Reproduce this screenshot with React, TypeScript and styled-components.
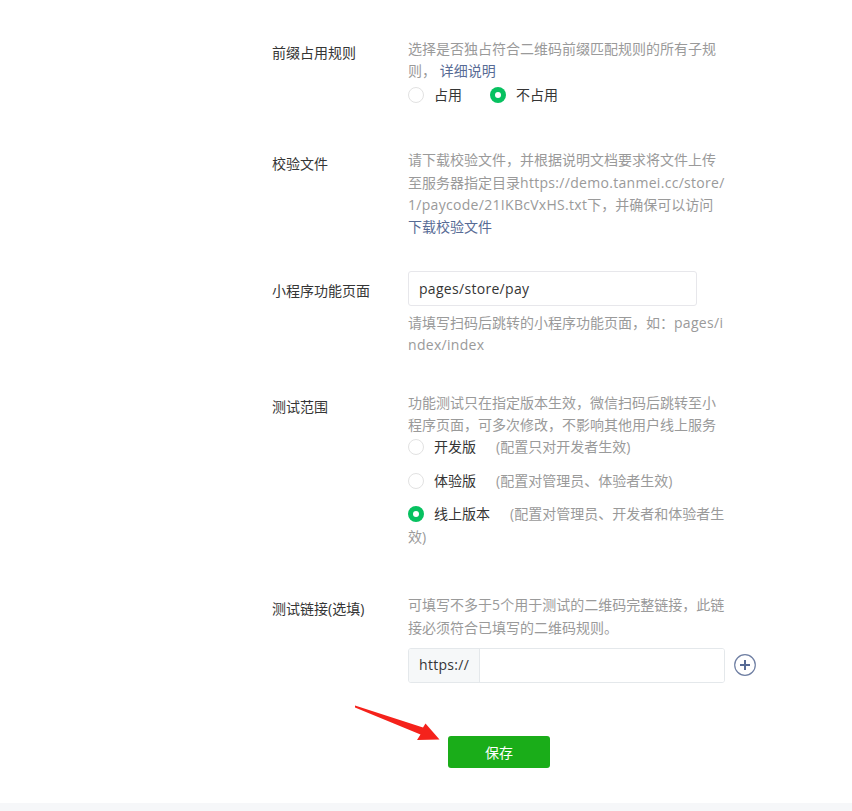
import React from "react";
import styled, { createGlobalStyle } from "styled-components";

const GlobalStyle = createGlobalStyle`
  html, body {
    margin: 0;
    padding: 0;
    background: #fff;
  }
  body {
    font-family: "Open Sans", "Noto Sans CJK SC", sans-serif;
    font-size: 14px;
    color: #353535;
  }
  * {
    box-sizing: border-box;
  }
`;

const Page = styled.div`
  position: relative;
  width: 852px;
  min-height: 811px;
  display: flex;
  flex-direction: column;
  background: #fff;
`;

const Main = styled.main`
  flex: 1;
  padding: 38px 0 0 272px;
`;

const FooterBand = styled.div`
  height: 8px;
  background: #f6f7f9;
`;

const Form = styled.div`
  width: 454px;
`;

const Row = styled.div<{ $top?: number }>`
  display: grid;
  grid-template-columns: 136px 320px;
  margin-top: ${(p) => p.$top ?? 0}px;
  line-height: 22.4px;
`;

const Label = styled.div<{ $offset: number }>`
  padding-top: ${(p) => p.$offset}px;
  color: #353535;
  white-space: nowrap;
`;

const Field = styled.div`
  min-width: 0;
`;

const Desc = styled.div<{ $top?: number }>`
  margin-top: ${(p) => p.$top ?? 0}px;
  color: #9a9a9a;
  word-break: break-all;
`;

const TextLink = styled.a<{ $block?: boolean }>`
  display: ${(p) => (p.$block ? "block" : "inline")};
  color: #576b95;
  text-decoration: none;
  cursor: pointer;
`;

const Latin = styled.span`
  letter-spacing: 0.3px;
`;

const InlineRadios = styled.div`
  margin-top: 1px;
`;

const InlineOption = styled.label`
  display: inline-block;
  margin-right: 28px;
  color: #353535;
`;

const RadioList = styled.div``;

const ListOption = styled.label`
  display: block;
  color: #353535;
  word-break: break-all;
  & + & {
    margin-top: 11px;
  }
`;

const RadioMark = styled.span<{ $checked?: boolean }>`
  position: relative;
  display: inline-block;
  width: 16px;
  height: 16px;
  margin-right: 10px;
  border-radius: 50%;
  vertical-align: -3px;
  border: ${(p) => (p.$checked ? "none" : "1px solid #e2e2e2")};
  background: ${(p) => (p.$checked ? "#07c160" : "#fff")};
  &::after {
    content: "";
    display: ${(p) => (p.$checked ? "block" : "none")};
    position: absolute;
    top: 5px;
    left: 5px;
    width: 6px;
    height: 6px;
    border-radius: 50%;
    background: #fff;
  }
`;

const OptionHint = styled.span`
  margin-left: 20px;
  color: #9a9a9a;
`;

const TextInput = styled.input`
  display: block;
  width: 289px;
  height: 35px;
  padding: 0 10px;
  border: 1px solid #e7e7eb;
  border-radius: 3px;
  font: inherit;
  font-size: 14px;
  letter-spacing: 0.3px;
  color: #353535;
  background: #fff;
  outline: none;
`;

const LinkRow = styled.div`
  display: flex;
  align-items: center;
  gap: 9px;
  margin-top: 9px;
`;

const InputGroup = styled.div`
  display: flex;
  flex: none;
  width: 317px;
  height: 35px;
  border: 1px solid #e4e8eb;
  border-radius: 3px;
  overflow: hidden;
  background: #fff;
`;

const Prefix = styled.div`
  display: flex;
  align-items: center;
  width: 71px;
  padding-left: 10px;
  border-right: 1px solid #e4e8eb;
  background: #f6f8f9;
  color: #353535;
  letter-spacing: 0.3px;
`;

const GroupInput = styled.input`
  flex: 1;
  min-width: 0;
  border: none;
  padding: 0 10px;
  font: inherit;
  font-size: 14px;
  color: #353535;
  outline: none;
  background: #fff;
`;

const AddButton = styled.button`
  display: flex;
  align-items: center;
  justify-content: center;
  width: 22px;
  height: 22px;
  padding: 0;
  border: none;
  background: none;
  cursor: pointer;
`;

const Actions = styled.div`
  display: flex;
  justify-content: center;
  margin-top: 53px;
`;

const SaveButton = styled.button`
  width: 102px;
  height: 32px;
  border: none;
  border-radius: 3px;
  background: #1aad19;
  color: #fff;
  font: inherit;
  font-size: 14px;
  cursor: pointer;
`;

const ArrowMark = styled.svg`
  position: absolute;
  left: 350px;
  top: 700px;
  pointer-events: none;
`;

const PlusIcon = () => (
  <svg width="22" height="22" viewBox="0 0 22 22">
    <circle cx="11" cy="11" r="10.3" fill="none" stroke="#6f7fa3" strokeWidth="1.2" />
    <path d="M11 6v10M6 11h10" stroke="#576b95" strokeWidth="2" strokeLinecap="butt" />
  </svg>
);

export default function App() {
  return (
    <>
      <GlobalStyle />
      <Page>
        <Main>
          <Form>
            <Row>
              <Label $offset={4}>前缀占用规则</Label>
              <Field>
                <Desc>
                  选择是否独占符合二维码前缀匹配规则的所有子规则， <TextLink>详细说明</TextLink>
                </Desc>
                <InlineRadios>
                  <InlineOption>
                    <RadioMark />
                    占用
                  </InlineOption>
                  <InlineOption>
                    <RadioMark $checked />
                    不占用
                  </InlineOption>
                </InlineRadios>
              </Field>
            </Row>

            <Row $top={43}>
              <Label $offset={4}>校验文件</Label>
              <Field>
                <Desc>
                  请下载校验文件，并根据说明文档要求将文件上传至服务器指定目录
                  <Latin>https://demo.tanmei.cc/store/1/paycode/21IKBcVxHS.txt</Latin>
                  下，并确保可以访问
                  <TextLink $block>下载校验文件</TextLink>
                </Desc>
              </Field>
            </Row>

            <Row $top={32}>
              <Label $offset={9}>小程序功能页面</Label>
              <Field>
                <TextInput defaultValue="pages/store/pay" />
                <Desc $top={6}>
                  请填写扫码后跳转的小程序功能页面，如：<Latin>pages/index/index</Latin>
                </Desc>
              </Field>
            </Row>

            <Row $top={35}>
              <Label $offset={4}>测试范围</Label>
              <Field>
                <Desc>功能测试只在指定版本生效，微信扫码后跳转至小程序页面，可多次修改，不影响其他用户线上服务</Desc>
                <RadioList>
                  <ListOption>
                    <RadioMark />
                    开发版
                    <OptionHint>(配置只对开发者生效)</OptionHint>
                  </ListOption>
                  <ListOption>
                    <RadioMark />
                    体验版
                    <OptionHint>(配置对管理员、体验者生效)</OptionHint>
                  </ListOption>
                  <ListOption>
                    <RadioMark $checked />
                    线上版本
                    <OptionHint>(配置对管理员、开发者和体验者生效)</OptionHint>
                  </ListOption>
                </RadioList>
              </Field>
            </Row>

            <Row $top={46}>
              <Label $offset={4}>测试链接(选填)</Label>
              <Field>
                <Desc>
                  可填写不多于<Latin>5</Latin>个用于测试的二维码完整链接，此链接必须符合已填写的二维码规则。
                </Desc>
                <LinkRow>
                  <InputGroup>
                    <Prefix>https://</Prefix>
                    <GroupInput />
                  </InputGroup>
                  <AddButton type="button" aria-label="添加">
                    <PlusIcon />
                  </AddButton>
                </LinkRow>
              </Field>
            </Row>

            <Actions>
              <SaveButton type="button">保存</SaveButton>
            </Actions>
          </Form>
        </Main>
        <FooterBand />
        <ArrowMark width="95" height="45" viewBox="350 700 95 45">
          <polygon
            points="355,705.5 423,727.5 425.5,723.5 439.5,739.5 417,740 420.5,734.5 355,707.5"
            fill="#f5221b"
          />
        </ArrowMark>
      </Page>
    </>
  );
}
